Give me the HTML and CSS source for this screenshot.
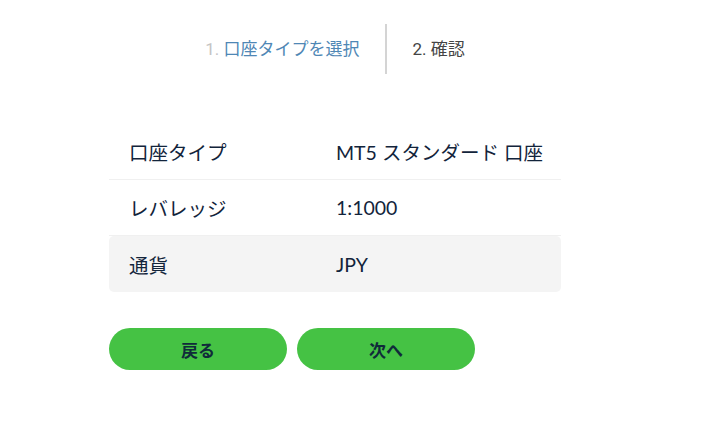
FILE: index.html
```html
<!DOCTYPE html>
<html lang="ja">
<head>
<meta charset="utf-8">
<link rel="stylesheet" href="styles.css">
</head>
<body>
<div class="wrap">
  <div class="steps">
    <div class="step step-active"><span><span class="num">1.</span> 口座タイプを選択</span></div>
    <div class="divider"></div>
    <div class="step step-next"><span>2. 確認</span></div>
  </div>
  <div class="table">
    <div class="row">
      <div class="label">口座タイプ</div>
      <div class="value">MT5 スタンダード 口座</div>
    </div>
    <div class="row">
      <div class="label">レバレッジ</div>
      <div class="value">1:1000</div>
    </div>
    <div class="row row-shade">
      <div class="label">通貨</div>
      <div class="value">JPY</div>
    </div>
  </div>
  <div class="buttons">
    <button class="btn">戻る</button>
    <button class="btn">次へ</button>
  </div>
</div>
</body>
</html>
```
FILE: styles.css
```css
html, body {
  margin: 0;
  padding: 0;
  background: #ffffff;
}
body {
  font-family: "Lato", "Noto Sans CJK JP", sans-serif;
  color: #12243b;
}
.wrap {
  width: 452px;
  margin-left: 109px;
  padding-top: 24px;
}
.steps {
  display: flex;
  justify-content: center;
  align-items: stretch;
  height: 50px;
}
.step {
  display: flex;
  align-items: center;
  font-size: 17px;
  padding-bottom: 3px;
  box-sizing: border-box;
  font-family: "Roboto", "Noto Sans CJK JP", sans-serif;
}
.step-active {
  color: #4f87b5;
  padding-right: 25px;
}
.step-active .num {
  color: #c4c4c4;
}
.step-next {
  color: #444444;
  padding-left: 26px;
}
.divider {
  width: 2px;
  background: #d4d4d4;
}
.table {
  margin-top: 50px;
}
.row {
  display: grid;
  grid-template-columns: 227px 1fr;
  height: 56px;
  align-items: center;
  font-size: 19.5px;
  border-bottom: 1px solid #f0f0f0;
  box-sizing: border-box;
}
.row-shade {
  background: #f4f4f4;
  border-bottom: none;
  border-radius: 5px;
}
.label {
  padding-left: 20px;
}
.buttons {
  display: flex;
  gap: 10px;
  margin-top: 36px;
}
.btn {
  width: 178px;
  height: 42px;
  border: none;
  border-radius: 21px;
  background: #45c244;
  color: #102b3a;
  font-family: "Noto Sans CJK JP", sans-serif;
  font-weight: 700;
  font-size: 17px;
  padding: 0;
}
```
